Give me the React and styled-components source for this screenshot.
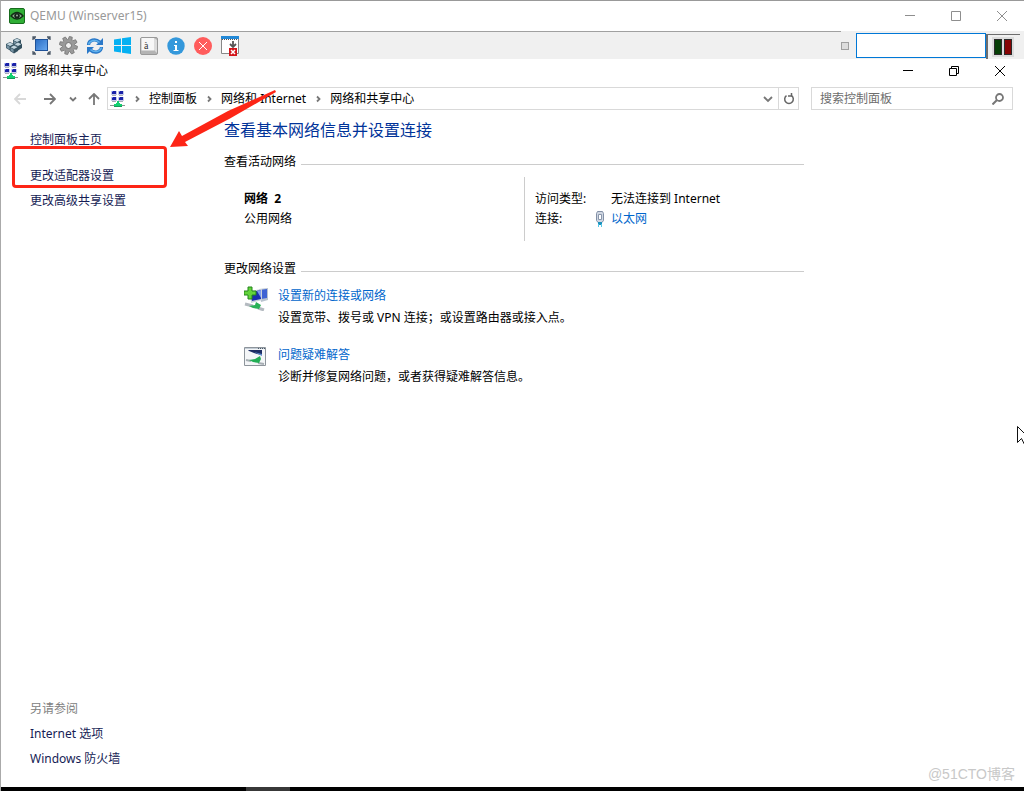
import React from 'react';
import styled, { createGlobalStyle } from 'styled-components';

const toolbarItems = [
    { label: 'Ctrl+Alt+Del', Icon: CubesIcon },
    { label: 'Full screen', Icon: FullscreenIcon },
    { label: 'Options', Icon: GearIcon },
    { label: 'Refresh', Icon: SyncIcon },
    { label: 'Start menu', Icon: WindowsIcon },
    { label: 'Send keys', Icon: KeyIcon },
    { label: 'Connection info', Icon: InfoIcon },
    { label: 'Disconnect', Icon: CloseCircleIcon },
    { label: 'Hide toolbar', Icon: HideIcon },
];

const crumbs = ['控制面板', '网络和 Internet', '网络和共享中心'];

const tasks = [
    {
        title: '设置新的连接或网络',
        text: '设置宽带、拨号或 VPN 连接；或设置路由器或接入点。',
        Icon: NewConnectionIcon,
    },
    {
        title: '问题疑难解答',
        text: '诊断并修复网络问题，或者获得疑难解答信息。',
        Icon: TroubleshootIcon,
    },
];

function App() {
    return (
        <Screen>
            <GlobalStyle />
            <ViewerTitle>
                <QemuIcon />
                <h1>QEMU (Winserver15)</h1>
                <WindowControls $color="#8e8e8e" />
            </ViewerTitle>
            <TitleRule />
            <Toolbar>
                {toolbarItems.map(({ label, Icon }) => (
                    <ToolButton key={label} aria-label={label}>
                        <Icon />
                    </ToolButton>
                ))}
                <Grip />
                <ToolInput aria-label="Command" />
                <Leds>
                    <div>
                        <Led $color="#063f06" />
                        <Led $color="#860505" />
                    </div>
                </Leds>
            </Toolbar>

            <GuestTitle>
                <NetworkIcon />
                <h2>网络和共享中心</h2>
                <WindowControls $color="#000" restored />
            </GuestTitle>

            <NavBar>
                <NavButton $width={30} $color="#d8d8d8" aria-label="后退">
                    <ArrowIcon d="M12 6H1M6 1L1 6l5 5" />
                </NavButton>
                <NavButton $width={30} $color="#777" aria-label="前进">
                    <ArrowIcon d="M0 6h11M6 1l5 5-5 5" />
                </NavButton>
                <NavButton $width={16} $color="#777" aria-label="最近的位置">
                    <ArrowIcon d="M3 4.500l3 3 3-3" />
                </NavButton>
                <NavButton $width={26} $color="#777" aria-label="上移">
                    <ArrowIcon d="M6 12V1M1 6l5-5 5 5" />
                </NavButton>
                <AddressBar>
                    <NetworkIcon />
                    {crumbs.map((crumb) => (
                        <React.Fragment key={crumb}>
                            <CrumbArrow>
                                <ArrowIcon d="M5 3.500l2.500 2.500L5 8.500" />
                            </CrumbArrow>
                            <a href="#crumb">{crumb}</a>
                        </React.Fragment>
                    ))}
                    <DropButton aria-label="历史">
                        <ArrowIcon d="M2 4l4 4 4-4" />
                    </DropButton>
                    <RefreshButton aria-label="刷新">
                        <RefreshIcon />
                    </RefreshButton>
                </AddressBar>
                <Search>
                    <input type="search" aria-label="搜索控制面板" placeholder="搜索控制面板" />
                    <SearchIcon />
                </Search>
            </NavBar>

            <Body>
                <Sidebar>
                    <HomeLink href="#home">控制面板主页</HomeLink>
                    <SideLink href="#adapter">更改适配器设置</SideLink>
                    <SideLink href="#sharing">更改高级共享设置</SideLink>
                    <SeeAlso>另请参阅</SeeAlso>
                    <SideLink href="#internet">Internet 选项</SideLink>
                    <SideLink href="#firewall">Windows 防火墙</SideLink>
                </Sidebar>
                <Main>
                    <Heading>查看基本网络信息并设置连接</Heading>
                    <SectionTitle>查看活动网络</SectionTitle>
                    <ActiveNetwork>
                        <NetworkName>
                            <strong>网络&nbsp; 2</strong>
                            <span>公用网络</span>
                        </NetworkName>
                        <Details>
                            <dt>访问类型:</dt>
                            <dd>
                                <span />
                                无法连接到 Internet
                            </dd>
                            <dt>连接:</dt>
                            <dd>
                                <span>
                                    <EthernetIcon />
                                </span>
                                <Link href="#ethernet">以太网</Link>
                            </dd>
                        </Details>
                    </ActiveNetwork>
                    <SectionTitle>更改网络设置</SectionTitle>
                    <Tasks>
                        {tasks.map(({ title, text, Icon }) => (
                            <li key={title}>
                                <Icon />
                                <div>
                                    <Link href="#task">{title}</Link>
                                    <p>{text}</p>
                                </div>
                            </li>
                        ))}
                    </Tasks>
                </Main>
            </Body>

            <Taskbar>
                <span />
            </Taskbar>

            <Highlight />
            <Pointer width="108" height="60" viewBox="0 0 108 60" aria-hidden="true">
                <path d="M0 57L9 41l3 5L58 21l47-21 1 2-46 26.500L15 52l3 4z" fill="#fd2516" />
            </Pointer>
            <Cursor width="7" height="20" viewBox="0 0 7 20" aria-hidden="true">
                <path d="M.5.5v16l4-4 3 6V7.500z" fill="#fff" stroke="#111" />
            </Cursor>
            <Watermark>@51CTO博客</Watermark>
        </Screen>
    );
}

function WindowControls({ $color, restored }) {
    return (
        <Controls $color={$color} $inset={restored ? 2 : 0}>
            <button aria-label="Minimize">
                <ControlIcon d="M0 4.500h10" />
            </button>
            <button aria-label="Maximize">
                <ControlIcon d={restored ? 'M.5 2.500h7v7h-7zM2.500 2.500v-2h7v7h-2' : 'M.5.5h9v9H.5z'} />
            </button>
            <button aria-label="Close">
                <ControlIcon d="M0 0l10 10M10 0L0 10" />
            </button>
        </Controls>
    );
}

function ControlIcon({ d }) {
    return (
        <svg width="10" height="10" viewBox="0 0 10 10" fill="none" stroke="currentColor">
            <path d={d} />
        </svg>
    );
}

function ArrowIcon({ d }) {
    return (
        <svg width="12" height="12" viewBox="0 0 12 12" fill="none" stroke="currentColor" strokeWidth="1.800">
            <path d={d} />
        </svg>
    );
}

function QemuIcon() {
    return (
        <svg width="16" height="16" viewBox="0 0 16 16">
            <rect x=".5" y=".5" width="15" height="15" rx="1.500" fill="#2fae35" stroke="#176b1d" />
            <path d="M2 8q6-7 12 0-6 6-12 0z" fill="#8fae90" stroke="#102d13" strokeWidth="1.400" />
            <circle cx="8" cy="7.700" r="2.800" fill="#15251a" />
            <circle cx="8" cy="7.500" r="1" fill="#9ab09b" />
        </svg>
    );
}

function CubesIcon() {
    const cube = (x, y) => (
        <g key={`${x}-${y}`} transform={`translate(${x} ${y})`}>
            <path d="M0 2l4-2 4 2v4L4 8.500 0 6z" fill="#33505f" />
            <path d="M.6 2.200L4 .6l3.400 1.600L4 4z" fill="#c3d6e0" />
            <path d="M.6 3L3.600 4.600v3L.6 5.800z" fill="#7894a5" />
        </g>
    );
    return (
        <svg width="18" height="16" viewBox="0 0 18 16">
            {cube(8, 0)}
            {cube(1, 4)}
            {cube(9, 4)}
            {cube(5, 7)}
        </svg>
    );
}

function FullscreenIcon() {
    return (
        <svg width="19" height="19" viewBox="0 0 19 19">
            <defs>
                <linearGradient id="screen" x1="0" y1="0" x2="1" y2="1">
                    <stop offset="0" stopColor="#2a6dc4" />
                    <stop offset="1" stopColor="#6aaaf0" />
                </linearGradient>
            </defs>
            <rect x="3.500" y="3.500" width="12" height="11" fill="url(#screen)" stroke="#1f5298" />
            <path
                d="M1 4V1h3M15 1h3v3M18 15v3h-3M4 18H1v-3M1 1l2 2M18 1l-2 2M18 18l-2-2M1 18l2-2"
                fill="none"
                stroke="#4a5766"
                strokeWidth="1.300"
            />
        </svg>
    );
}

function GearIcon() {
    return (
        <svg width="19" height="19" viewBox="0 0 19 19">
            {[15, 60, 105, 150].map((angle) => (
                <path
                    key={angle}
                    d="M8 .5h3l.6 4v10l-.6 4H8l-.6-4v-10z"
                    fill="#999"
                    stroke="#6f6f6f"
                    strokeWidth=".7"
                    transform={`rotate(${angle} 9.500 9.500)`}
                />
            ))}
            <circle cx="9.500" cy="9.500" r="6" fill="#999" />
            <circle cx="9.500" cy="9.500" r="3" fill="#f0f0f0" stroke="#6f6f6f" />
        </svg>
    );
}

function SyncIcon() {
    return (
        <svg width="18" height="18" viewBox="0 0 18 18" fill="none">
            <g stroke="#2a78c8" strokeWidth="3.200">
                <path d="M2.500 8c0-5 7-7 11-3" />
                <path d="M15.500 10c0 5-7 7-11 3" />
            </g>
            <path d="M17 1v7h-7zM1 17v-7h7z" fill="#2a78c8" />
            <g stroke="#5eb2ee" strokeWidth="1.300">
                <path d="M2.500 7.500c1-4 7-6 11-2" />
                <path d="M15.500 10.500c-1 4-7 6-11 2" />
            </g>
        </svg>
    );
}

function WindowsIcon() {
    return (
        <svg width="17" height="17" viewBox="0 0 17 17" fill="#05b0f2">
            <path d="M0 2.500l7-1V8H0zM8 1.300L17 0v8H8zM0 9h7v6.500l-7-1zM8 9h9v8l-9-1.300z" />
        </svg>
    );
}

function KeyIcon() {
    return (
        <svg width="18" height="18" viewBox="0 0 18 18">
            <rect x=".5" y=".5" width="17" height="17" rx="1.500" fill="#b4b4b4" stroke="#999" />
            <path d="M1.500 1H14v12.500H1.500z" fill="#f7f7f7" />
            <path d="M14 1l3 2v13l-3-3z" fill="#dcdcdc" />
            <text x="4" y="12" fontFamily="Liberation Serif, serif" fontSize="10" fill="#333">
                à
            </text>
        </svg>
    );
}

function InfoIcon() {
    return (
        <svg width="18" height="18" viewBox="0 0 18 18">
            <circle cx="9" cy="9" r="8.700" fill="#3498db" />
            <path d="M8 4h2v2H8zM7 8h3v5h1.500v1h-5v-1H8V9H7z" fill="#fff" />
        </svg>
    );
}

function CloseCircleIcon() {
    return (
        <svg width="18" height="18" viewBox="0 0 18 18">
            <circle cx="9" cy="9" r="9" fill="#ff5c5c" />
            <path d="M5 5l8 8M13 5l-8 8" stroke="#fff" />
        </svg>
    );
}

function HideIcon() {
    return (
        <svg width="18" height="20" viewBox="0 0 18 20">
            <path d="M.5.5h17v17H.5z" fill="#fff" stroke="#888" />
            <path d="M0 0h18v3H0z" fill="#2389d7" />
            <path d="M1 3.500h16" stroke="#555" strokeDasharray="1 1" />
            <path d="M12 5v6M9 8l3 3 3-3" fill="none" stroke="#555" strokeWidth="1.800" />
            <path d="M8 12h8v8H8z" fill="#d3151b" />
            <path d="M10 14l4 4M14 14l-4 4" stroke="#fff" strokeWidth="1.500" />
        </svg>
    );
}

function NetworkIcon() {
    return (
        <svg width="15" height="16" viewBox="0 0 15 16" shapeRendering="crispEdges">
            {[
                [1, 0],
                [8, 0],
                [1, 6],
                [8, 6],
            ].map(([x, y]) => (
                <g key={`${x}-${y}`} transform={`translate(${x} ${y})`}>
                    <path d="M0 0h6v4H0z" fill="#c6cbe8" />
                    <path d="M1 0h4v3H1z" fill="#1a22a8" />
                    <path d="M1 0h1v1H1z" fill="#6b7cf0" />
                    <path d="M1 4h4v1H1z" fill="#a9adb8" />
                </g>
            ))}
            <path d="M7 10h2v2h1v1h2v2H4v-2h2v-1h1z" fill="#12cf70" />
            <path d="M0 14h4v1H0zM12 14h3v1h-3z" fill="#8c9591" />
            <path d="M4 15h8v1H4z" fill="#159a58" />
        </svg>
    );
}

function RefreshIcon() {
    return (
        <svg width="12" height="12" viewBox="0 0 12 12" fill="none" stroke="#666" strokeWidth="1.500">
            <path d="M3.500 2.600a4.300 4.300 0 1 0 5 0" />
            <path d="M9.500 .5v3.500H6" transform="translate(-1 -1)" />
        </svg>
    );
}

function SearchIcon() {
    return (
        <svg width="12" height="12" viewBox="0 0 12 12" fill="none" stroke="#777">
            <circle cx="7.500" cy="4.500" r="3.500" strokeWidth="1.800" />
            <path d="M5 7L.5 11.500" strokeWidth="2" />
        </svg>
    );
}

function EthernetIcon() {
    return (
        <svg width="10" height="16" viewBox="0 0 10 16">
            <path d="M2.500.5h5l1 2v7l-1.500 2H3l-1.500-2v-7z" fill="#cfd6e2" stroke="#8290a6" />
            <path d="M3.500 3.500h3v5h-3z" fill="#fff" stroke="#8a97ab" />
            <path d="M3 11h4v3H3z" fill="#1c92bd" />
            <path d="M3.500 13v3M6.500 13v3" stroke="#57c8e8" />
        </svg>
    );
}

function NewConnectionIcon() {
    return (
        <svg width="24" height="25" viewBox="0 0 24 25">
            <path d="M15 3l9-1v12l-7 2z" fill="#b9c3cf" />
            <path d="M16 4l7-1v9l-6 1z" fill="#3e62d4" />
            <path d="M6 5l12-2v11L7 17z" fill="#c9d1da" />
            <path d="M7 6l10-2v9L8 15z" fill="#1a2fb0" />
            <path d="M13 5l4-1v8z" fill="#7f9cf0" />
            <path d="M1 18l8 2M14 22l6 2" stroke="#b4bac0" strokeWidth="3" />
            <path d="M5 20l6-1 1-3 5 3-2 4-6-1z" fill="#28b057" />
            <path d="M4 1h4v4h4v4H8v4H4V9H0V5h4z" fill="#63d33b" stroke="#22851a" />
        </svg>
    );
}

function TroubleshootIcon() {
    return (
        <svg width="24" height="23" viewBox="0 0 24 23">
            <path d="M.5 2.500h21v18H.5z" fill="#f4f6f8" stroke="#8d949b" />
            <path d="M1 3h20v1H1z" fill="#c3ccd5" />
            <path d="M14 3.500h7" stroke="#4d5a68" strokeDasharray="1 1" />
            <path d="M4 5h14v5l-5-1-8-3z" fill="#1c2c63" />
            <path d="M10 7l8 2v2z" fill="#5c87c9" />
            <path d="M2 15l5 1M14 18l6 1" stroke="#a6adb3" strokeWidth="2" />
            <path d="M5 15l6-1 5-3 1 3-2 4-6-1z" fill="#22ad54" />
        </svg>
    );
}

const GlobalStyle = createGlobalStyle`
    * {
        box-sizing: border-box;
    }

    body {
        margin: 0;
        background: #fff;
        color: #000;
        font: 12px/20px 'Noto Sans', 'Noto Sans CJK SC', sans-serif;
    }

    h1, h2, h3, p, dl, dd, ul {
        margin: 0;
        padding: 0;
        font-size: inherit;
        font-weight: 400;
    }

    a {
        color: inherit;
        text-decoration: none;
    }

    button {
        display: flex;
        align-items: center;
        justify-content: center;
        padding: 0;
        border: 0;
        background: none;
        color: inherit;
    }

    svg {
        display: block;
        flex-shrink: 0;
    }
`;

const Screen = styled.div`
    position: relative;
    display: flex;
    flex-direction: column;
    min-height: 100vh;
    border-top: 1px solid #999;
    border-left: 1px solid #aaa;
    overflow: hidden;
`;

const ViewerTitle = styled.header`
    display: flex;
    align-items: center;
    gap: 5px;
    height: 30px;
    padding-left: 8px;
    color: #999;
`;

const TitleRule = styled.div`
    height: 1px;
    border-right: 183px solid #f0f0f0;
    background: #a0a0a0;
`;

const Controls = styled.div`
    display: flex;
    gap: 2px;
    margin-left: auto;
    padding-right: ${(props) => props.$inset}px;
    color: ${(props) => props.$color};

    button {
        width: 44px;
        height: 22px;
    }
`;

const Toolbar = styled.div`
    display: flex;
    align-items: center;
    gap: 7px;
    height: 27px;
    padding: 0 4px 0 3px;
    background: #f0f0f0;
`;

const ToolButton = styled.button`
    width: 20px;
    height: 20px;
`;

const Grip = styled.div`
    width: 8px;
    height: 8px;
    margin-left: auto;
    border: 1px solid #a0a0a0;
    background: #ddd;
`;

const ToolInput = styled.input`
    width: 130px;
    height: 25px;
    border: 1px solid #0078d7;
    background: #fff;
    font: inherit;
    outline: none;
`;

const Leds = styled.div`
    display: flex;
    align-items: center;
    align-self: flex-end;
    justify-content: center;
    width: 34px;
    height: 25px;
    margin-left: -7px;
    padding-right: 2px;
    border: 2px solid #6d6d6d;
    border-width: 1px 0 0 2px;

    div {
        display: flex;
        gap: 2px;
        padding: 2px;
        background: #dcdcdc;
    }
`;

const Led = styled.span`
    width: 8px;
    height: 16px;
    border: 1px solid #2b2b2b;
    background: ${(props) => props.$color};
`;

const GuestTitle = styled.header`
    display: flex;
    align-items: center;
    gap: 6px;
    height: 23px;
    padding-left: 2px;
`;

const NavBar = styled.div`
    display: flex;
    height: 28px;
    padding: 5px 11px 0 4px;
`;

const NavButton = styled.button`
    width: ${(props) => props.$width}px;

    && {
        color: ${(props) => props.$color};
    }
`;

const AddressBar = styled.div`
    display: flex;
    flex: 1;
    align-items: center;
    height: 23px;
    padding-left: 2px;
    border: 1px solid #d9d9d9;
`;

const CrumbArrow = styled.span`
    display: flex;
    justify-content: center;
    width: 24px;
    color: #777;
`;

const DropButton = styled.button`
    width: 20px;
    height: 21px;
    margin-left: auto;

    && {
        color: #777;
    }
`;

const RefreshButton = styled.button`
    width: 20px;
    height: 21px;

    && {
        border-left: 1px solid #d9d9d9;
    }
`;

const Search = styled.label`
    display: flex;
    align-items: center;
    width: 202px;
    height: 23px;
    margin-left: 12px;
    padding: 0 8px;
    border: 1px solid #d9d9d9;

    input {
        flex: 1;
        min-width: 0;
        padding: 0;
        border: 0;
        outline: none;
        font: inherit;
    }

    input::placeholder {
        color: #6d6d6d;
    }
`;

const Body = styled.div`
    display: flex;
    flex: 1;
`;

const Sidebar = styled.nav`
    display: flex;
    flex-direction: column;
    align-items: flex-start;
    width: 223px;
    padding: 17px 0 16px 29px;
    line-height: 25px;
`;

const SideLink = styled.a`
    color: #151c55;
`;

const HomeLink = styled(SideLink)`
    margin-bottom: 11px;
`;

const SeeAlso = styled.p`
    margin-top: auto;
    color: #808080;
`;

const Main = styled.main`
    flex: 1;
    max-width: 580px;
    padding-top: 8px;
`;

const Heading = styled.h2`
    margin-bottom: 10px;
    color: #003399;
    font-size: 16px;
    line-height: 24px;
`;

const SectionTitle = styled.h3`
    display: flex;
    align-items: center;
    gap: 5px;

    &::after {
        content: '';
        flex: 1;
        height: 1px;
        margin-top: 4px;
        background: #ccc;
    }
`;

const ActiveNetwork = styled.div`
    display: flex;
    margin: 5px 0 18px;
`;

const NetworkName = styled.div`
    display: flex;
    flex-direction: column;
    width: 300px;
    padding: 12px 0 12px 20px;
`;

const Details = styled.dl`
    display: grid;
    grid-template-columns: 60px auto;
    align-content: start;
    padding: 12px 0 12px 10px;
    border-left: 1px solid #ccc;

    dd {
        display: flex;
        align-items: center;
    }

    span {
        width: 16px;
    }
`;

const Link = styled.a`
    color: #0066cc;
`;

const Tasks = styled.ul`
    display: flex;
    flex-direction: column;
    gap: 15px;
    margin-top: 6px;
    padding-left: 20px;
    line-height: 22px;
    list-style: none;

    li {
        display: flex;
        gap: 10px;
    }

    svg {
        margin-top: 1px;
    }
`;

const Taskbar = styled.footer`
    height: 4px;
    padding-left: 245px;
    background: #000;

    span {
        display: block;
        width: 44px;
        height: 4px;
        background: #383838;
    }
`;

/* marks drawn on top of the window */
const Highlight = styled.div`
    position: absolute;
    top: 145px;
    left: 11px;
    width: 155px;
    height: 42px;
    border: 3px solid #fd2516;
    border-radius: 4px;
`;

const Pointer = styled.svg`
    position: absolute;
    top: 89px;
    left: 169px;
`;

const Cursor = styled.svg`
    position: absolute;
    top: 425px;
    right: 0;
`;

const Watermark = styled.div`
    position: absolute;
    right: 9px;
    bottom: 7px;
    color: #c8c8c8;
    font: 14px/20px 'Liberation Sans', 'Noto Sans CJK SC', sans-serif;
`;

export default App;
